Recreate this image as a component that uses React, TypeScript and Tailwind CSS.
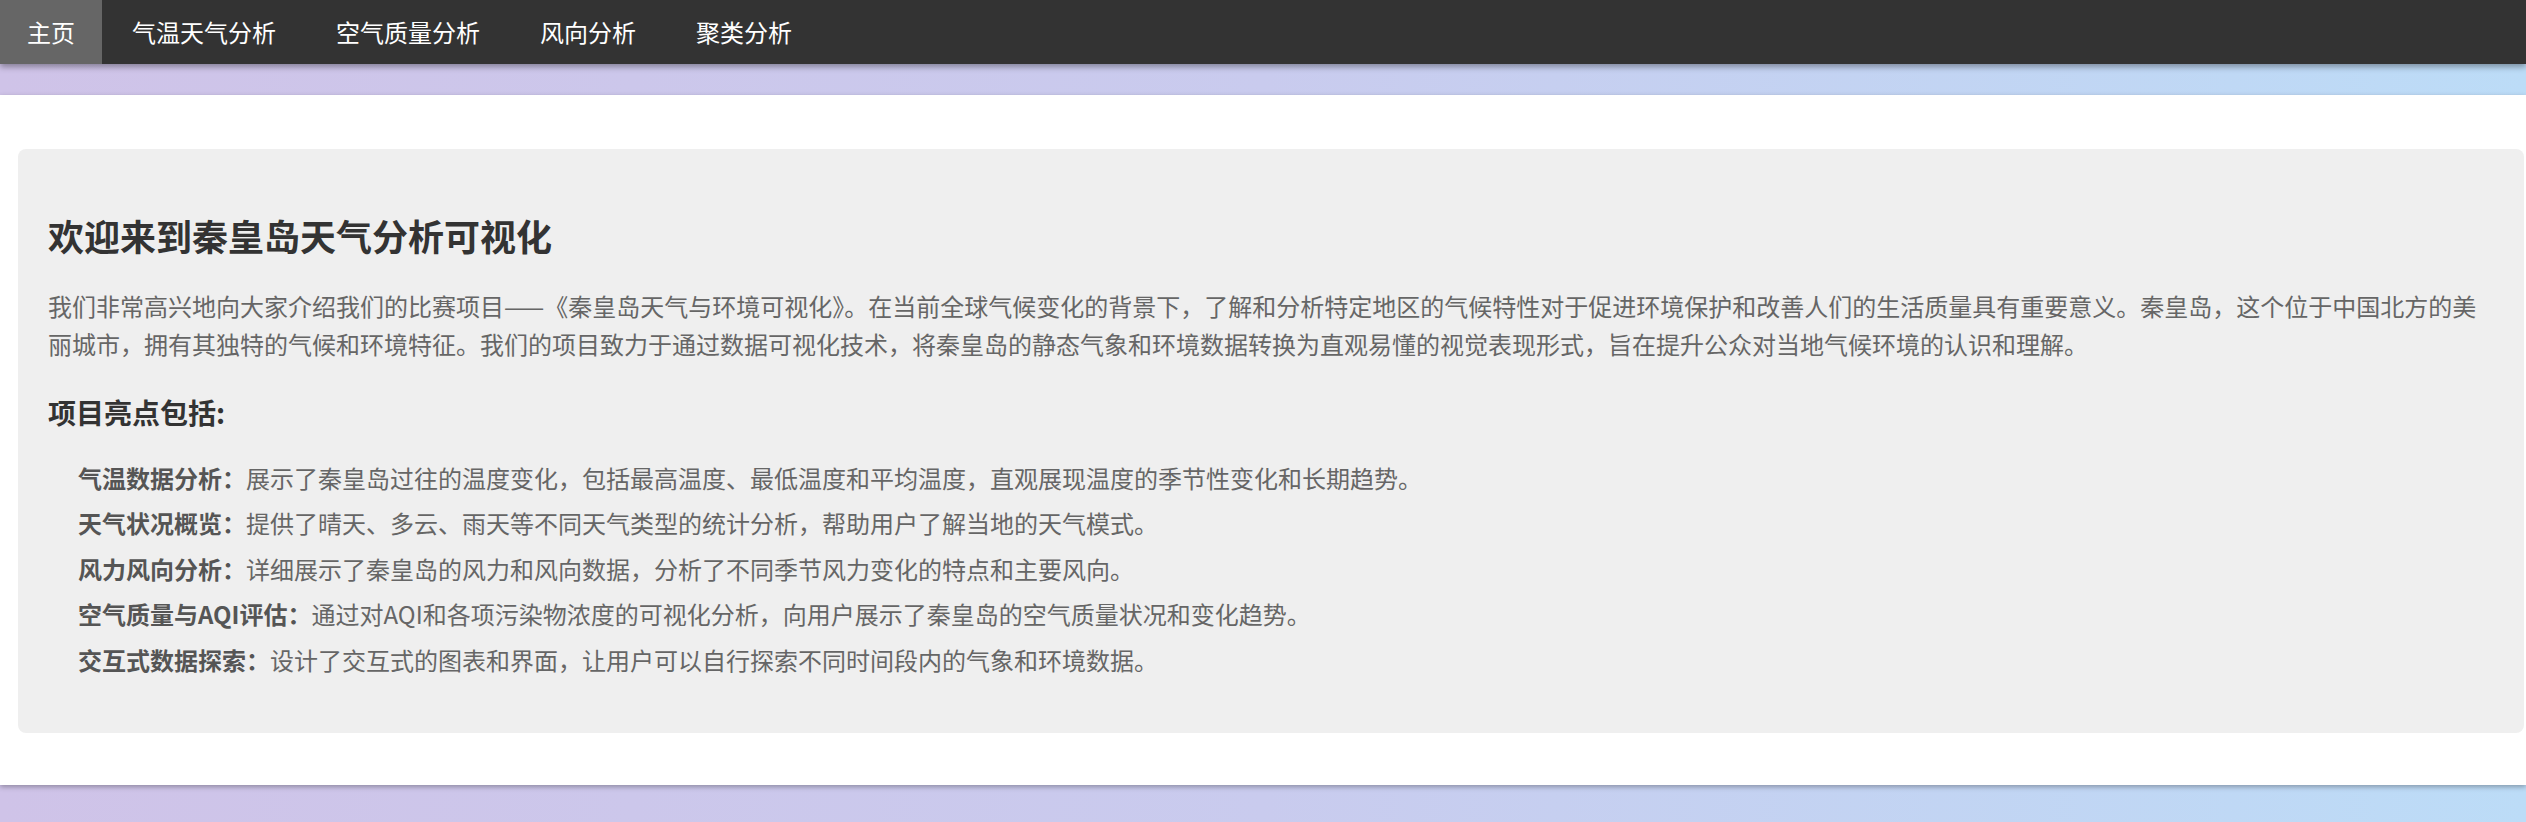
const navItems = ['主页', '气温天气分析', '空气质量分析', '风向分析', '聚类分析']

const highlights = [
  {
    title: '气温数据分析：',
    text: '展示了秦皇岛过往的温度变化，包括最高温度、最低温度和平均温度，直观展现温度的季节性变化和长期趋势。',
  },
  {
    title: '天气状况概览：',
    text: '提供了晴天、多云、雨天等不同天气类型的统计分析，帮助用户了解当地的天气模式。',
  },
  {
    title: '风力风向分析：',
    text: '详细展示了秦皇岛的风力和风向数据，分析了不同季节风力变化的特点和主要风向。',
  },
  {
    title: '空气质量与AQI评估：',
    text: '通过对AQI和各项污染物浓度的可视化分析，向用户展示了秦皇岛的空气质量状况和变化趋势。',
  },
  {
    title: '交互式数据探索：',
    text: '设计了交互式的图表和界面，让用户可以自行探索不同时间段内的气象和环境数据。',
  },
]

export default function App() {
  return (
    <div className="min-h-[822px] w-full overflow-hidden bg-[linear-gradient(to_right,#cfc3e8,#c9cbee_50%,#bcdcf7)] font-['Noto_Sans_CJK_SC','Noto_Sans',sans-serif]">
      <nav className="relative z-10 flex h-[64px] bg-[#333] shadow-[0_3px_6px_rgba(0,0,0,0.35)]">
        {navItems.map((item, i) => (
          <a
            key={item}
            href="#"
            className={
              i === 0
                ? 'flex items-center bg-[#666] px-[27px] text-[24px] leading-[64px] text-white'
                : 'flex items-center px-[30px] text-[24px] leading-[64px] text-white'
            }
          >
            {item}
          </a>
        ))}
      </nav>

      <main className="mt-[31px] h-[690px] bg-white pt-[54px] shadow-[0_2px_5px_rgba(0,0,0,0.3)]">
        <section className="ml-[18px] mr-[2px] h-[584px] rounded-[8px] bg-[#efefef] pl-[30px] pr-[30px] pt-[30px]">
          <h2 className="mt-[32px] text-[36px] font-bold leading-[48px] text-[#333]">
            欢迎来到秦皇岛天气分析可视化
          </h2>
          <p className="mt-[28px] text-[24px] leading-[38.4px] text-[#666]">
            我们非常高兴地向大家介绍我们的比赛项目——《秦皇岛天气与环境可视化》。在当前全球气候变化的背景下，了解和分析特定地区的气候特性对于促进环境保护和改善人们的生活质量具有重要意义。秦皇岛，这个位于中国北方的美丽城市，拥有其独特的气候和环境特征。我们的项目致力于通过数据可视化技术，将秦皇岛的静态气象和环境数据转换为直观易懂的视觉表现形式，旨在提升公众对当地气候环境的认识和理解。
          </p>
          <h3 className="mt-[28px] text-[28px] font-bold leading-[40px] text-[#333]">项目亮点包括:</h3>
          <ul className="mt-[23px] pl-[30px]">
            {highlights.map((h) => (
              <li key={h.title} className="text-[24px] leading-[45.5px] text-[#666]">
                <strong className="font-bold text-[#555]">{h.title}</strong>
                {h.text}
              </li>
            ))}
          </ul>
        </section>
      </main>
    </div>
  )
}
